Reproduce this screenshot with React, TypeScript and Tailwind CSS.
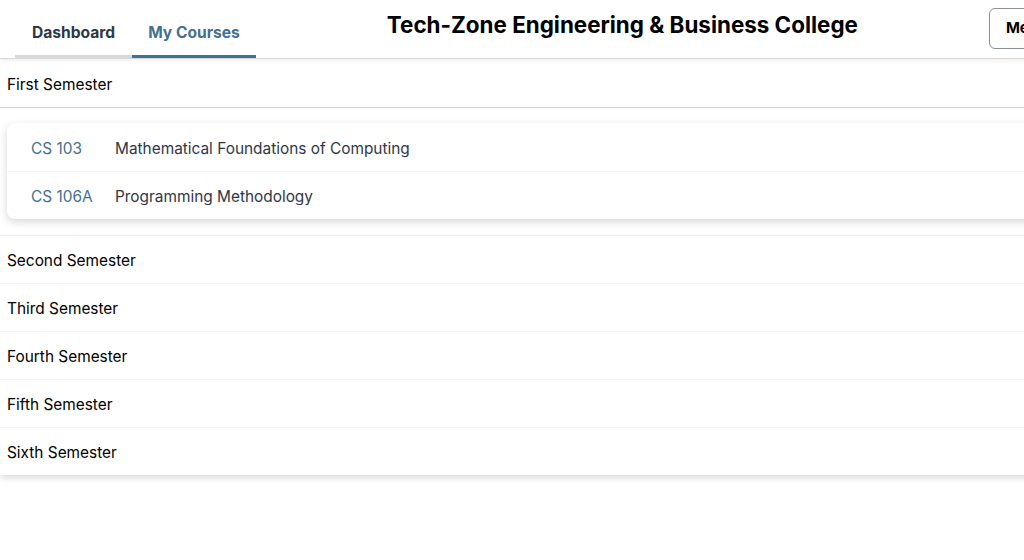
import React from "react";

const courses = [
  { code: "CS 103", name: "Mathematical Foundations of Computing" },
  { code: "CS 106A", name: "Programming Methodology" },
];

const otherSemesters = ["Second Semester", "Third Semester", "Fourth Semester", "Fifth Semester", "Sixth Semester"];

export default function App() {
  return (
    <div className="w-full min-h-screen overflow-hidden bg-white" style={{ fontFamily: "Inter, 'Noto Sans', sans-serif" }}>
      <div className="w-[1120px]">
        {/* header */}
        <header className="h-[59px] flex items-center gap-[131px] pl-[15px] border-b border-[#d6d6d6] shadow-[0_2px_4px_rgba(0,0,0,0.06)]">
          <nav className="flex self-end">
            <a className="px-[17px] h-[58px] flex items-center pt-[10px] text-[15.6px] font-bold text-[#2d3748] border-b-[3px] border-[#d9d9d9]">
              Dashboard
            </a>
            <a className="px-[16px] h-[58px] flex items-center pt-[10px] text-[15.6px] font-bold text-[#44708f] border-b-[3px] border-[#44708f]">
              My Courses
            </a>
          </nav>
          <h1 className="text-[22.4px] font-bold text-black -mt-[8px] whitespace-nowrap">
            Tech-Zone Engineering &amp; Business College
          </h1>
          <button className="h-[41px] px-[16px] -mt-[1px] border border-[#8a8f98] rounded-md text-[15px] font-bold text-black bg-white">
            Menu
          </button>
        </header>

        {/* first semester, expanded */}
        <div className="h-[49px] flex items-center pt-[3px] px-[7px] text-[15.4px] text-black border-b border-[#cfcfcf]">
          First Semester
        </div>
        <div className="px-[7px] pt-[15px] pb-[16px]">
          <div className="rounded-lg bg-white shadow-[0_3px_8px_rgba(0,0,0,0.16)]">
            {courses.map((c, i) => (
              <div
                key={c.code}
                className={`h-[48px] flex items-center px-[24px] text-[15.4px] ${i > 0 ? "border-t border-[#f2f2f2] pt-[2px]" : "pt-[3px]"}`}
              >
                <span className="w-[84px] text-[#44708f]">{c.code}</span>
                <span className="text-[#2d3748]">{c.name}</span>
              </div>
            ))}
          </div>
        </div>

        {/* remaining semesters */}
        <div className="shadow-[0_3px_6px_rgba(0,0,0,0.14)]">
          {otherSemesters.map((s) => (
            <div key={s} className="h-[48px] flex items-center pt-[2px] px-[7px] text-[15.4px] text-black border-t border-[#f1f1f1]">
              {s}
            </div>
          ))}
        </div>
      </div>
    </div>
  );
}
